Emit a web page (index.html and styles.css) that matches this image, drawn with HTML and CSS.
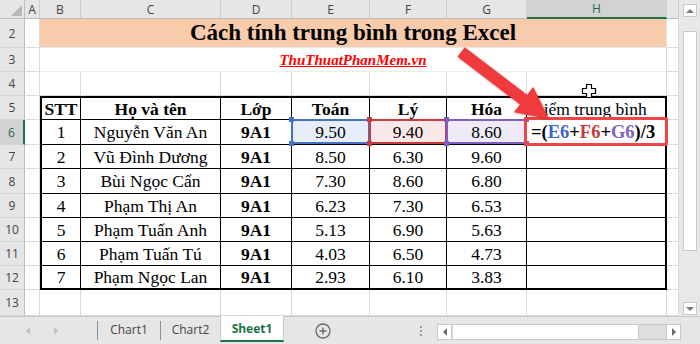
FILE: index.html
```html
<!DOCTYPE html>
<html lang="vi">
<head>
<meta charset="utf-8">
<title>Cách tính trung bình trong Excel</title>
<link rel="stylesheet" href="styles.css">
</head>
<body>
<div class="app">
  <div class="main">
    <div class="sheet">
      <!-- row 1: column headers -->
      <div class="corner"><svg width="25" height="19" viewBox="0 0 25 19"><polygon points="11,16 22,16 22,5" fill="#b8b8b8"/></svg></div>
      <div class="ch">A</div>
      <div class="ch">B</div>
      <div class="ch">C</div>
      <div class="ch">D</div>
      <div class="ch">E</div>
      <div class="ch">F</div>
      <div class="ch">G</div>
      <div class="ch act">H</div>
      <div class="ch"></div>

      <!-- row 2 -->
      <div class="rh">2</div>
      <div class="c"></div>
      <div class="c title">Cách tính trung bình trong Excel</div>
      <div class="c"></div>

      <!-- row 3 -->
      <div class="rh">3</div>
      <div class="c"></div>
      <div class="c logo"><span>ThuThuatPhanMem.vn</span></div>
      <div class="c"></div>

      <!-- row 4 -->
      <div class="rh">4</div>
      <div class="c"></div><div class="c"></div><div class="c"></div><div class="c"></div><div class="c"></div><div class="c"></div><div class="c"></div><div class="c"></div><div class="c"></div>

      <!-- table B5:H12 -->
      <div class="tbl">
        <div class="td b">STT</div><div class="td b">Họ và tên</div><div class="td b">Lớp</div><div class="td b">Toán</div><div class="td b">Lý</div><div class="td b">Hóa</div><div class="td left">Điểm trung bình</div>

        <div class="td">1</div><div class="td">Nguyễn Văn An</div><div class="td b">9A1</div>
        <div class="td ref blue"><span class="rb"><i class="hd tl"></i><i class="hd tr"></i><i class="hd bl"></i><i class="hd br"></i></span>9.50</div>
        <div class="td ref red"><span class="rb"><i class="hd tl"></i><i class="hd tr"></i><i class="hd bl"></i><i class="hd br"></i></span>9.40</div>
        <div class="td ref purple"><span class="rb"><i class="hd tl"></i><i class="hd tr"></i><i class="hd bl"></i><i class="hd br"></i></span>8.60</div>
        <div class="td left formula"><span class="hl"></span>=(<span class="fb">E6</span>+<span class="fr">F6</span>+<span class="fp">G6</span>)/3</div>

        <div class="td">2</div><div class="td">Vũ Đình Dương</div><div class="td b">9A1</div><div class="td">8.50</div><div class="td">6.30</div><div class="td">9.60</div><div class="td"></div>
        <div class="td">3</div><div class="td">Bùi Ngọc Cẩn</div><div class="td b">9A1</div><div class="td">7.30</div><div class="td">8.60</div><div class="td">6.80</div><div class="td"></div>
        <div class="td">4</div><div class="td">Phạm Thị An</div><div class="td b">9A1</div><div class="td">6.23</div><div class="td">7.30</div><div class="td">6.53</div><div class="td"></div>
        <div class="td">5</div><div class="td">Phạm Tuấn Anh</div><div class="td b">9A1</div><div class="td">5.13</div><div class="td">6.90</div><div class="td">5.63</div><div class="td"></div>
        <div class="td">6</div><div class="td">Phạm Tuấn Tú</div><div class="td b">9A1</div><div class="td">4.03</div><div class="td">6.50</div><div class="td">4.73</div><div class="td"></div>
        <div class="td">7</div><div class="td">Phạm Ngọc Lan</div><div class="td b">9A1</div><div class="td">2.93</div><div class="td">6.10</div><div class="td">3.83</div><div class="td"></div>
      </div>

      <div class="rh">5</div><div class="c"></div><div class="c"></div>
      <div class="rh act">6</div><div class="c"></div><div class="c"></div>
      <div class="rh">7</div><div class="c"></div><div class="c"></div>
      <div class="rh">8</div><div class="c"></div><div class="c"></div>
      <div class="rh">9</div><div class="c"></div><div class="c"></div>
      <div class="rh">10</div><div class="c"></div><div class="c"></div>
      <div class="rh">11</div><div class="c"></div><div class="c"></div>
      <div class="rh">12</div><div class="c"></div><div class="c"></div>

      <!-- row 13 -->
      <div class="rh">13</div>
      <div class="c"></div><div class="c"></div><div class="c"></div><div class="c"></div><div class="c"></div><div class="c"></div><div class="c"></div><div class="c"></div><div class="c"></div>
    </div>

    <div class="vscroll">
      <div class="sbtn"><span class="tri up"></span></div>
      <div class="vthumb"></div>
      <div class="vfill"></div>
      <div class="sbtn"><span class="tri down"></span></div>
    </div>
  </div>

  <div class="tabbar">
    <div class="nav"><span class="tri navl"></span><span class="tri navr"></span></div>
    <div class="sep"></div>
    <div class="tab w1">Chart1</div>
    <div class="sep"></div>
    <div class="tab w2">Chart2</div>
    <div class="tab active">Sheet1</div>
    <div class="add"><svg width="16" height="16" viewBox="0 0 16 16"><circle cx="8" cy="8" r="7" fill="none" stroke="#6a6a6a" stroke-width="1.3"/><path d="M8 4.5V11.5M4.5 8H11.5" stroke="#6a6a6a" stroke-width="1.4"/></svg></div>
    <div class="spacer"></div>
    <div class="dots"><i></i><i></i><i></i></div>
    <div class="hscroll">
      <div class="hbtn"><span class="tri hl-l"></span></div>
      <div class="hthumb"></div>
      <div class="htrack"></div>
      <div class="hbtn"><span class="tri hl-r"></span></div>
    </div>
  </div>

  <svg class="overlay" width="700" height="344" viewBox="0 0 700 344">
    <polygon class="arrow" points="457.4,56.8 464.6,47.2 527.1,94.8 533.2,86.9 549,119 513.8,112.3 519.9,104.4"/>
    <path class="cursor" d="M586.5 84.5H591.5V88.5H595.5V93.5H591.5V97.5H586.5V93.5H582.5V88.5H586.5Z"/>
  </svg>
</div>
</body>
</html>
```

FILE: styles.css
```css
* { box-sizing: border-box; }

html, body {
  margin: 0;
  padding: 0;
}

body {
  width: 700px;
  height: 344px;
  overflow: hidden;
  background: #e6e6e6;
  font-family: "Open Sans", "Noto Sans", sans-serif;
}

.app {
  position: relative;
  width: 700px;
  height: 344px;
}

.main {
  display: flex;
  height: 316px;
}

/* ---------- sheet grid ---------- */
.sheet {
  display: grid;
  grid-template-columns: 25px 15px 41px 140px 71px 78px 77px 80px 140px 12px;
  grid-template-rows: 19px 29px 24px 24px 24px 25px 24px 25px 24px 24px 24px 24px 26px;
  width: 679px;
  background: #fff;
  border-right: 1px solid #d0d0d0;
}

.corner {
  background: #e6e6e6;
  border-right: 1px solid #bdbdbd;
  border-bottom: 1px solid #bdbdbd;
}
.corner svg { display: block; }

.ch {
  background: #e6e6e6;
  border-right: 1px solid #cdcdcd;
  border-bottom: 1px solid #bdbdbd;
  color: #444;
  font-size: 12px;
  display: flex;
  align-items: center;
  justify-content: center;
}
.ch.act {
  background: #d2d2d2;
  border-bottom: 2px solid #217346;
  color: #1c6b44;
}

.rh {
  background: #e6e6e6;
  border-right: 1px solid #bdbdbd;
  border-bottom: 1px solid #d6d6d6;
  color: #444;
  font-size: 12px;
  display: flex;
  align-items: center;
  justify-content: center;
}
.rh.act {
  background: #d2d2d2;
  border-right: 2px solid #217346;
  color: #1c6b44;
}

.c {
  border-right: 1px solid #dadada;
  border-bottom: 1px solid #dadada;
}

.title {
  grid-column: span 7;
  background: #f8cbad;
  border-color: #e8e8e8;
  display: flex;
  align-items: center;
  justify-content: center;
  font-family: "Liberation Serif", "Times New Roman", serif;
  font-weight: bold;
  font-size: 23px;
  color: #000;
}

.logo {
  grid-column: span 7;
  border-right-color: #dadada;
  border-bottom-color: #ececec;
  display: flex;
  align-items: center;
  justify-content: center;
  font-family: "Liberation Serif", "Times New Roman", serif;
  font-weight: bold;
  font-style: italic;
  font-size: 15px;
  color: #ff0000;
  text-decoration: underline;
  padding-top: 2px;
}

/* ---------- data table ---------- */
.tbl {
  grid-column: 3 / 10;
  grid-row: 5 / 13;
  display: grid;
  grid-template-columns: 39px 140px 71px 78px 77px 80px 138px;
  grid-template-rows: 22px 25px 24px 25px 24px 24px 24px 22px;
  border: 2px solid #000;
  font-family: "Liberation Serif", "Times New Roman", serif;
  font-size: 17.5px;
  color: #000;
}

.td {
  display: flex;
  align-items: center;
  justify-content: center;
  border-right: 1px solid #000;
  border-bottom: 1px solid #000;
  white-space: nowrap;
  padding-top: 1px;
}
.td:nth-child(7n) { border-right: none; }
.td:nth-child(n+50) { border-bottom: none; }

.td.b { font-weight: bold; }
.td.left {
  justify-content: flex-start;
  padding-left: 4px;
}

.td.ref { position: relative; }
.td.blue { background: #e8eef9; --rc: #4472c4; }
.td.red { background: #fbe8e8; --rc: #cc3b3b; }
.td.purple { background: #eeeaf7; --rc: #7f5fc6; }

.rb {
  position: absolute;
  left: -1px;
  right: -1px;
  top: -1px;
  bottom: 0;
  border: 2px solid var(--rc);
}
.hd {
  position: absolute;
  width: 5px;
  height: 5px;
  background: var(--rc);
}
.hd.tl { left: -4px; top: -4px; }
.hd.tr { right: -4px; top: -4px; }
.hd.bl { left: -4px; bottom: -4px; }
.hd.br { right: -4px; bottom: -4px; }

.formula {
  position: relative;
  font-weight: bold;
  font-size: 18.5px;
  padding-left: 3px;
}
.fb { color: #3d67c6; }
.fr { color: #c83a3a; }
.fp { color: #8062c0; }

.hl {
  position: absolute;
  left: -3px;
  right: -3px;
  top: -3px;
  bottom: -2px;
  border: 3px solid #ee4646;
  border-radius: 2px;
}

/* ---------- vertical scrollbar ---------- */
.vscroll {
  width: 21px;
  background: #e8e8e8;
  display: flex;
  flex-direction: column;
  align-items: flex-start;
  padding: 4px 0 1px 4px;
}
.sbtn {
  width: 14px;
  height: 13px;
  background: #fff;
  border: 1px solid #c8c8c8;
  display: flex;
  align-items: center;
  justify-content: center;
}
.vthumb {
  margin-top: 14px;
  width: 14px;
  height: 220px;
  background: #fff;
  border: 1px solid #c8c8c8;
}
.vfill { flex: 1; }

.tri {
  width: 0;
  height: 0;
  display: block;
}
.tri.up {
  border-left: 4px solid transparent;
  border-right: 4px solid transparent;
  border-bottom: 4px solid #7a7a7a;
}
.tri.down {
  border-left: 4px solid transparent;
  border-right: 4px solid transparent;
  border-top: 4px solid #7a7a7a;
}

/* ---------- tab bar ---------- */
.tabbar {
  display: flex;
  align-items: flex-start;
  height: 28px;
  background: #e6e6e6;
  border-top: 1px solid #c8c8c8;
  color: #444;
  font-size: 12px;
}

.nav {
  width: 97px;
  height: 27px;
  display: flex;
  align-items: center;
  padding-left: 26px;
  gap: 24px;
}
.tri.navl {
  border-top: 4px solid transparent;
  border-bottom: 4px solid transparent;
  border-right: 4px solid #c2c2c2;
}
.tri.navr {
  border-top: 4px solid transparent;
  border-bottom: 4px solid transparent;
  border-left: 4px solid #c2c2c2;
}

.sep {
  width: 1px;
  height: 19px;
  margin-top: 4px;
  background: #8f8f8f;
}

.tab {
  height: 26px;
  display: flex;
  align-items: center;
  justify-content: center;
  padding-bottom: 1px;
}
.tab.w1 { width: 62px; }
.tab.w2 { width: 59px; }
.tab.active {
  width: 64px;
  margin-top: -1px;
  height: 26px;
  background: #fff;
  border-left: 1px solid #c8c8c8;
  border-right: 1px solid #c8c8c8;
  border-bottom: 2px solid #217346;
  color: #217346;
  font-weight: bold;
  padding-top: 1px;
}

.add {
  margin-left: 31px;
  margin-top: 6px;
  width: 16px;
  height: 16px;
}
.add svg { display: block; }

.spacer { flex: 1; }

.dots {
  width: 2px;
  margin-right: 15px;
  margin-top: 9px;
  display: flex;
  flex-direction: column;
  gap: 2px;
}
.dots i {
  width: 2px;
  height: 2px;
  background: #9a9a9a;
}

.hscroll {
  width: 244px;
  height: 16px;
  margin-top: 7px;
  margin-right: 19px;
  display: flex;
  border: 1px solid #c8c8c8;
  background: #dedede;
}
.hbtn {
  width: 14px;
  background: #fff;
  display: flex;
  align-items: center;
  justify-content: center;
}
.hbtn:first-child { border-right: 1px solid #c8c8c8; }
.hbtn:last-child { border-left: 1px solid #c8c8c8; }
.hthumb {
  width: 186px;
  margin-left: 1px;
  background: #fff;
  border-right: 1px solid #c8c8c8;
}
.htrack { flex: 1; }
.tri.hl-l {
  border-top: 4px solid transparent;
  border-bottom: 4px solid transparent;
  border-right: 4px solid #6a6a6a;
}
.tri.hl-r {
  border-top: 4px solid transparent;
  border-bottom: 4px solid transparent;
  border-left: 4px solid #6a6a6a;
}

/* ---------- annotation overlay ---------- */
.overlay {
  position: absolute;
  left: 0;
  top: 0;
  pointer-events: none;
}
.arrow {
  fill: #ef3a3e;
  filter: drop-shadow(1px 1px 1px rgba(120, 0, 0, 0.35));
}
.cursor {
  fill: #fff;
  stroke: #000;
  stroke-width: 1.2;
}
```
